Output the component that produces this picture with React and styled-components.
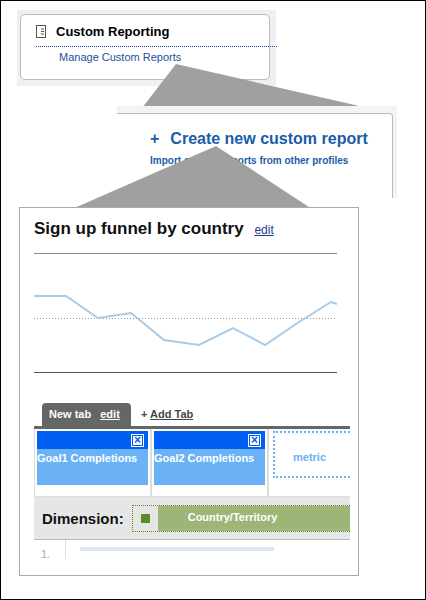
import React from 'react';
import styled, { createGlobalStyle } from 'styled-components';

const Global = createGlobalStyle`
  body { margin: 0; font-family: "Liberation Sans", Arial, sans-serif; }
`;

const points = [[33,301],[65,301],[97,323],[130,318],[163,345],[198,350],[232,333],[264,350],[298,327],[330,307],[336,309]];

function App() {
  return (
    <Frame>
      <Global />
      <Callout style={{ zIndex: 2 }} width="426" height="600">
        <polygon points="176,64 142,108 368,108" fill="#a0a0a0" />
      </Callout>
      <Callout style={{ zIndex: 4 }} width="426" height="600">
        <polygon points="216,146 72,209 312,209" fill="#a0a0a0" />
      </Callout>

      <MenuPanel>
        <MenuCard>
          <MenuTitle>
            <svg width="10" height="13" viewBox="0 0 10 13">
              <rect x="0.5" y="0.5" width="9" height="12" fill="#fff" stroke="#555" />
              <path d="M5 4h3M5 6.5h3M5 9h3" stroke="#555" />
            </svg>
            Custom Reporting
          </MenuTitle>
          <MenuLink>Manage Custom Reports</MenuLink>
        </MenuCard>
      </MenuPanel>

      <CreatePanel>
        <CreateCard>
          <CreateLink><span>+</span>Create new custom report</CreateLink>
          <ImportLink>Import custom reports from other profiles</ImportLink>
        </CreateCard>
      </CreatePanel>

      <ReportPanel>
        <Clip>
          <ReportTitle>Sign up funnel by country <EditLink>edit</EditLink></ReportTitle>
          <Chart>
            <svg width="426" height="122" viewBox="0 257 426 122">
              <line x1="33" y1="258.5" x2="336" y2="258.5" stroke="#888" />
              <line x1="33" y1="323.5" x2="336" y2="323.5" stroke="#999" strokeDasharray="1 2" />
              <line x1="33" y1="377.5" x2="336" y2="377.5" stroke="#555" />
              <polyline points={points.map(p => p.join(',')).join(' ')} fill="none" stroke="#a8cbe8" strokeWidth="2" />
            </svg>
          </Chart>
          <Tabs>
            <Tab>New tab <TabEdit>edit</TabEdit></Tab>
            <AddTab>+ <u>Add Tab</u></AddTab>
          </Tabs>
          <Metrics>
            <MetricCell>
              <Metric><MetricHead><Close>×</Close></MetricHead>Goal1 Completions</Metric>
            </MetricCell>
            <MetricCell>
              <Metric><MetricHead><Close>×</Close></MetricHead>Goal2 Completions</Metric>
            </MetricCell>
            <MetricCell>
              <EmptyMetric>metric</EmptyMetric>
            </MetricCell>
          </Metrics>
          <DimensionBar>
            <DimLabel>Dimension:</DimLabel>
            <Chip>
              <Grip />
              <ChipText>Country/Territory</ChipText>
            </Chip>
          </DimensionBar>
          <Rows>
            <RowNum>1.</RowNum>
            <RowBar />
          </Rows>
        </Clip>
      </ReportPanel>
    </Frame>
  );
}

export default App;

const Frame = styled.div`
  position: relative;
  width: 426px;
  height: 600px;
  box-sizing: border-box;
  border: 1px solid #000;
  padding-top: 9px;
  overflow: hidden;
`;

const Callout = styled.svg`
  position: absolute;
  left: -1px;
  top: -1px;
  pointer-events: none;
`;

const MenuPanel = styled.div`
  position: relative;
  z-index: 1;
  width: 259px;
  height: 76px;
  margin-left: 16px;
  background: #eef0f4;
  padding: 4px 3px;
  box-sizing: border-box;
`;

const MenuCard = styled.div`
  width: 250px;
  height: 66px;
  box-sizing: border-box;
  background: #fff;
  border: 1px solid #bbb;
  border-radius: 5px;
  padding: 9px 0 0 15px;
`;

const MenuTitle = styled.div`
  display: flex;
  align-items: center;
  gap: 10px;
  font-size: 13px;
  font-weight: bold;
  color: #000;
  padding-bottom: 7px;
  border-bottom: 1px dotted #1a4d99;
  width: 241px;
  margin-left: 0;
  & svg { margin-left: 0; }
`;

const MenuLink = styled.div`
  font-size: 11px;
  color: #1f4f9a;
  padding: 4px 0 0 23px;
`;

const CreatePanel = styled.div`
  position: relative;
  z-index: 3;
  width: 280px;
  height: 92px;
  margin: 20px 0 0 116px;
  background: #f2f3f6;
  padding-top: 7px;
  box-sizing: border-box;
`;

const CreateCard = styled.div`
  width: 276px;
  height: 85px;
  box-sizing: border-box;
  background: #fff;
  border: 1px solid #bbb;
  border-left: none;
  border-bottom: none;
  border-top-right-radius: 4px;
  padding: 16px 0 0 33px;
`;

const CreateLink = styled.div`
  font-size: 16px;
  font-weight: bold;
  color: #1a5ca8;
  & span { margin-right: 11px; }
`;

const ImportLink = styled.div`
  font-size: 10px;
  font-weight: bold;
  color: #1a5ca8;
  margin-top: 7px;
`;

const ReportPanel = styled.div`
  position: relative;
  z-index: 5;
  width: 340px;
  height: 369px;
  margin: 9px 0 0 18px;
  box-sizing: border-box;
  border: 1px solid #aaa;
  background: #fff;
`;

const Clip = styled.div`
  width: 316px;
  overflow: hidden;
  padding-left: 14px;
`;

const ReportTitle = styled.div`
  font-size: 17px;
  font-weight: bold;
  color: #111;
  padding-top: 11px;
`;

const EditLink = styled.span`
  font-size: 12px;
  font-weight: normal;
  color: #1a3f8a;
  text-decoration: underline;
  margin-left: 6px;
`;

const Chart = styled.div`
  margin: 13px 0 0 -33px;
  height: 122px;
  & svg { display: block; }
`;

const Tabs = styled.div`
  display: flex;
  align-items: flex-end;
  margin-top: 29px;
  border-bottom: 3px solid #666;
  padding-left: 8px;
`;

const Tab = styled.div`
  background: #666;
  color: #fff;
  font-size: 11px;
  font-weight: bold;
  padding: 5px 6px 6px 7px;
  border-radius: 4px 4px 0 0;
  width: 76px;
`;

const TabEdit = styled.span`
  text-decoration: underline;
  margin-left: 6px;
`;

const AddTab = styled.div`
  font-size: 11px;
  font-weight: bold;
  color: #444;
  margin: 0 0 6px 10px;
`;

const Metrics = styled.div`
  display: flex;
  height: 67px;
  border-bottom: 1px solid #ddd;
`;

const MetricCell = styled.div`
  flex: 0 0 116px;
  border-left: 1px solid #ddd;
  border-right: 1px solid #ddd;
  padding: 2px 2px 0 2px;
  box-sizing: border-box;
`;

const Metric = styled.div`
  background: #6ab2f5;
  height: 54px;
  width: 111px;
  color: #fff;
  font-size: 11px;
  font-weight: bold;
  white-space: nowrap;
`;

const MetricHead = styled.div`
  background: #005ff5;
  height: 18px;
  display: flex;
  justify-content: flex-end;
  align-items: center;
  padding-right: 4px;
  margin-bottom: 3px;
`;

const Close = styled.span`
  width: 11px;
  height: 11px;
  background: #fff;
  color: #005ff5;
  border: 1px solid #fff;
  box-shadow: inset 0 0 0 1px #005ff5;
  font-size: 12px;
  line-height: 10px;
  text-align: center;
  font-weight: bold;
`;

const EmptyMetric = styled.div`
  width: 100px;
  height: 47px;
  border: 2px dotted #6ab2f5;
  color: #6ab2f5;
  font-size: 11px;
  font-weight: bold;
  padding: 18px 0 0 18px;
  box-sizing: border-box;
  margin-left: 2px;
`;

const DimensionBar = styled.div`
  display: flex;
  align-items: center;
  height: 42px;
  background: #e6e6e6;
  border-bottom: 1px solid #bbb;
  padding-left: 8px;
`;

const DimLabel = styled.div`
  font-size: 15px;
  font-weight: bold;
  color: #111;
  margin-right: 8px;
`;

const Chip = styled.div`
  display: flex;
  height: 27px;
  flex: 0 0 240px;
  border: 1px dotted #5f8a25;
  box-sizing: border-box;
`;

const Grip = styled.div`
  width: 25px;
  background: #5f8a25 radial-gradient(#c5d9a8 0.7px, transparent 0.8px) center / 2px 2px no-repeat content-box;
  background-image: radial-gradient(#c5d9a8 0.6px, transparent 0.7px);
  background-size: 2px 2px;
  background-clip: content-box;
  padding: 8px 8px;
  box-sizing: border-box;
`;

const ChipText = styled.div`
  flex: 1;
  background: #9eb578;
  color: #fff;
  font-size: 11px;
  font-weight: bold;
  padding: 5px 0 0 30px;
`;

const Rows = styled.div`
  display: flex;
  height: 19px;
`;

const RowNum = styled.div`
  width: 24px;
  color: #aaa;
  font-size: 11px;
  padding: 8px 0 0 7px;
  border-right: 1px solid #ddd;
`;

const RowBar = styled.div`
  width: 194px;
  height: 4px;
  background: #dce6f4;
  margin: 7px 0 0 14px;
`;
